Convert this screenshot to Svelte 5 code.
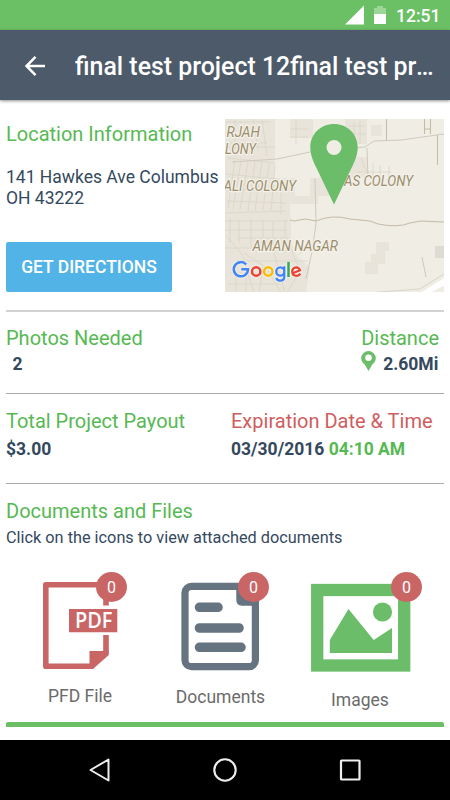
<script>
  let project = {
    title: "final test project 12final test project",
    address: ["141 Hawkes Ave Columbus", "OH 43222"],
    photos: 2,
    distance: "2.60Mi",
    payout: "$3.00",
    date: "03/30/2016",
    time: "04:10 AM",
  };

  let files = [
    { id: "pdf", label: "PFD File", count: 0 },
    { id: "doc", label: "Documents", count: 0 },
    { id: "img", label: "Images", count: 0 },
  ];
</script>

<div class="screen">
  <div class="status">
    <svg width="44" height="20" viewBox="0 0 44 20">
      <path d="M2 19.500L21 .5V19.500Z" fill="#fff" />
      <path d="M34 1h6v2h3v6H31V3h3z" fill="#fff" opacity=".35" />
      <path d="M31 9h12v10H31z" fill="#fff" />
    </svg>
    <span>12:51</span>
  </div>

  <header>
    <svg width="20" height="20" viewBox="0 0 20 20">
      <path d="M20 10H2M10.500 .9L1.500 10L10.500 19.100" fill="none" stroke="#fff" stroke-width="2.500" />
    </svg>
    <h1>{project.title}</h1>
  </header>

  <main>
    <section class="location">
      <div class="info">
        <h2 class="loc">Location Information</h2>
        <p class="address">{project.address[0]}<br />{project.address[1]}</p>
        <button type="button"><span>GET DIRECTIONS</span></button>
      </div>

      <svg class="map" width="219" height="173" viewBox="5 7 219 173">
        <rect x="5" y="7" width="219" height="174" fill="#f0ede5" />
        <!-- built up areas -->
        <g fill="#e8e4da">
          <path d="M5 7H55V47L54 66H75V84H98V92H70V105H71V130L78 145L90 155L86 181H5Z" />
          <path d="M70 7H93V26H70ZM125 7H147V32H125ZM151 13H162V24H151ZM127 45H148V65H127ZM90 66H110V84H90Z" />
          <path d="M156 130H169V139H165V152H158V162H145V150H151V142H156Z" />
        </g>
        <path d="M215 134H224V146H215Z" fill="#dedbd5" />
        <!-- minor streets -->
        <g fill="none" stroke="#d9d4c7" stroke-width=".8">
          <path d="M5 10H50M5 31H47M5 35H55M8 46L55 51M6 62L58 67M5 78L66 76M7 89L66 91M5 101L66 99M5 109H68M5 118H67M18 126H69M5 136H32M16 149H88M10 161H61M8 172H60" />
          <path d="M15 48L8 96M21 49L13 97M28 50L20 98M35 50L28 99M42 50L35 99M49 52L43 98M55 53L51 99M15 8V45M33 7L38 37M42 8L47 44M61 71V103" />
          <path d="M10 106V131M19 108V131M31 107V136M43 108V136M53 109V140M65 108V140" />
          <path d="M6 124L22 142L34 181M24 141L47 156L61 181M16 153V181M26 163V181M43 155L39 181M54 141L65 181M69 132L80 159L67 181M78 143L93 131" />
          <path d="M70 17H88M70 25H88M76 8V33M128 14H145M128 22H146M134 10V31M140 9V32" />
          <path d="M141 46L149 65M136 60H171M153 51V65M160 53V66M169 54V65" />
        </g>
        <g fill="none" stroke="#cfcabc" stroke-width="1">
          <path d="M12 50L57 47L90 40L145 35L154 29L181 28L224 22" />
          <path d="M95 67L96 112L92 140L86 167M147 36L148 65M202 145L206 165" />
        </g>
        <!-- bigger roads -->
        <g fill="none" stroke="#c3bba5">
          <path d="M166.500 7V28M204.500 7V22M210.500 7V22M204.500 17H210.500M217.500 23V53" />
          <path d="M70 108L74 109L85 107L96 109Q112 102 130 107L150 109L158 112Q178 116 190 111L201 109L224 110" />
        </g>
        <path d="M147 181L200 177L224 162" fill="none" stroke="#d8d3c6" />
        <path d="M197 183L229 163V171L206 183Z" fill="#fff" />
        <g class="place">
          <text x="6.500" y="25.300" textLength="33.500" lengthAdjust="spacingAndGlyphs">RJAH</text>
          <text x="5" y="42" textLength="31" lengthAdjust="spacingAndGlyphs">LONY</text>
          <text x="3.500" y="79" textLength="72.500" lengthAdjust="spacingAndGlyphs">ALI COLONY</text>
          <text x="124" y="74" textLength="69" lengthAdjust="spacingAndGlyphs">AS COLONY</text>
          <text x="32.500" y="139.300" textLength="85.500" lengthAdjust="spacingAndGlyphs">AMAN NAGAR</text>
        </g>
        <!-- google logo -->
        <g class="halo" fill="none">
          <path d="M26.200 152.500A7.100 7.100 0 1 0 28 157.300H21.300" stroke="#4285f4" stroke-width="2.500" />
          <circle cx="36.200" cy="159.500" r="4.200" stroke="#ea4335" stroke-width="2.500" />
          <circle cx="48.300" cy="159.500" r="4.200" stroke="#fbbc05" stroke-width="2.500" />
          <path d="M64.300 154.300V164.300Q64.300 168.700 60.300 168.700Q57.300 168.700 56.200 166M64.300 159.500A4 4.200 0 1 1 56.300 159.500A4 4.200 0 1 1 64.300 159.500" stroke="#4285f4" stroke-width="2.300" />
          <path d="M68.500 149.800V165" stroke="#34a853" stroke-width="2.500" />
          <path d="M72.700 161.300L80 158.200Q78.800 155.300 76.300 155.300Q72.200 155.700 72.200 159.700Q72.400 163.800 76.700 163.800Q79 163.800 80.300 161.700" stroke="#ea4335" stroke-width="2.300" />
        </g>
        <path d="M114 12C100.500 12 90.300 22 90.300 35.500C90.300 42 93 49 96 55L114 92.500L132 55C135 49 137.700 42 137.700 35.500C137.700 22 127.500 12 114 12Z" fill="#6bbd69" />
        <circle cx="114" cy="35.500" r="7.500" fill="#f0ede5" />
      </svg>
    </section>

    <section class="stats">
      <div>
        <h2 class="photos">Photos Needed</h2>
        <p class="value count">{project.photos}</p>
      </div>
      <div>
        <h2 class="distance">Distance</h2>
        <p class="value miles">
          <svg width="15" height="20" viewBox="0 0 15 20">
            <path d="M7.500 0A7.300 7.300 0 0 0 .2 7.300C.2 10 2 12 3.600 13.300L7.500 20L11.400 13.300C13 12 14.800 10 14.800 7.300A7.300 7.300 0 0 0 7.500 0ZM7.500 3.500A3.300 3.300 0 1 1 7.500 10.100A3.300 3.300 0 1 1 7.500 3.500Z" fill="#6bbd69" fill-rule="evenodd" />
          </svg>
          <span>{project.distance}</span>
        </p>
      </div>
    </section>

    <section class="payout">
      <div>
        <h2 class="total">Total Project Payout</h2>
        <p class="value">{project.payout}</p>
      </div>
      <div>
        <h2 class="expires">Expiration Date &amp; Time</h2>
        <p class="value">{project.date} <span class="time">{project.time}</span></p>
      </div>
    </section>

    <section class="documents">
      <h2 class="docs">Documents and Files</h2>
      <p class="hint">Click on the icons to view attached documents</p>
      <div class="files">
        {#each files as file}
          <div class="file {file.id}">
            {#if file.id === "pdf"}
              <svg width="140" height="102" viewBox="10 570 140 102">
                <path d="M106 605.500V584.700H45.800V666.300H91L106 651.500V635" fill="none" stroke="#ca6566" stroke-width="5.600" stroke-linejoin="round" />
                <path d="M89.500 651H108.800V655L93 669H89.500Z" fill="#ca6566" />
                <path d="M69 609H117.300V632.200H69Z" fill="#ca6566" />
                <text class="pdf-text" x="75" y="627.800" textLength="37.500" lengthAdjust="spacingAndGlyphs">PDF</text>
              </svg>
            {:else if file.id === "doc"}
              <svg width="140" height="102" viewBox="150 570 140 102">
                <rect x="185" y="586.300" width="70.400" height="80.400" rx="6.500" fill="none" stroke="#667380" stroke-width="7.200" />
                <path d="M236.300 586V600Q236.300 605.700 242 605.700H256V586Z" fill="#667380" />
                <path d="M199.500 607.300H218M199.500 628H239M199.500 647.300H241" stroke="#667380" stroke-width="9.600" stroke-linecap="round" />
              </svg>
            {:else}
              <svg width="140" height="102" viewBox="290 570 140 102">
                <rect x="317.200" y="590" width="87" height="75.500" fill="none" stroke="#6bbd69" stroke-width="12.300" />
                <path d="M329.800 640L348.500 609L373.700 640L392 628V653H329.800Z" fill="#6bbd69" />
                <circle cx="382.500" cy="612" r="9.600" fill="#6bbd69" />
              </svg>
            {/if}
            <span class="badge">{file.count}</span>
            <span class="label">{file.label}</span>
          </div>
        {/each}
      </div>
      <div class="bar"></div>
    </section>
  </main>

  <nav>
    <svg width="24" height="26" viewBox="0 0 24 26">
      <path d="M2.500 13L20.500 2.500V23.500Z" fill="none" stroke="#eee" stroke-width="2" stroke-linejoin="round" />
    </svg>
    <svg width="24" height="26" viewBox="0 0 24 26">
      <circle cx="12" cy="13" r="10.700" fill="none" stroke="#eee" stroke-width="2.100" />
    </svg>
    <svg width="24" height="26" viewBox="0 0 24 26">
      <rect x="3" y="3.500" width="18.500" height="19" rx=".6" fill="none" stroke="#eee" stroke-width="2.200" />
    </svg>
  </nav>
</div>

<style>
  :global(body) {
    background: #fff;
  }

  .screen {
    width: 450px;
    height: 800px;
    overflow: hidden;
    display: flex;
    flex-direction: column;
    font-family: Roboto, sans-serif;
    color: #34495e;
    background: #fff;
  }

  svg {
    display: block;
    flex: none;
  }

  h1,
  h2,
  p {
    margin: 0;
    font-weight: 400;
    white-space: nowrap;
  }

  .status {
    height: 30px;
    box-sizing: border-box;
    padding: 0 11px 0 0;
    background: #6bc065;
    display: flex;
    justify-content: flex-end;
    align-items: center;
    gap: 9px;
  }

  .status span {
    color: #fff;
    font-size: 17.500px;
    font-weight: 500;
    line-height: 30px;
    width: 43px;
    margin-top: 2px;
  }

  header {
    height: 70px;
    flex: none;
    box-sizing: border-box;
    padding: 0 10px 0 25px;
    background: #4c5a69;
    border-top: 1px solid #505571;
    box-shadow: 0 1px 3px rgba(0, 0, 0, 0.45);
    display: flex;
    align-items: center;
    gap: 30px;
  }

  h1 {
    flex: 1;
    min-width: 0;
    overflow: hidden;
    text-overflow: ellipsis;
    color: #fff;
    font-size: 24.900px;
    font-weight: 500;
    line-height: 34px;
    margin-top: 3px;
  }

  main {
    flex: 1;
    padding: 0 6px;
  }

  section {
    box-sizing: border-box;
    border-bottom: 1px solid #aaa;
  }

  h2 {
    color: #57b953;
    font-size: 20px;
    line-height: 24px;
  }

  .value {
    font-size: 17.500px;
    line-height: 22px;
    font-weight: 700;
  }

  .location {
    height: 212px;
    border-bottom: 2px solid #d3d3d3;
    display: flex;
  }

  .info {
    width: 219px;
    padding-top: 22px;
  }

  .address {
    margin-top: 21px;
    font-size: 17.500px;
    line-height: 21px;
  }

  button {
    display: block;
    width: 166px;
    height: 50px;
    margin: 33px 0 0;
    padding: 0;
    border: 0;
    border-radius: 2px;
    background: #51b3e6;
    color: #fff;
    font: 500 17.500px/51px Roboto, sans-serif;
  }

  .map {
    margin-top: 19px;
  }

  .place {
    font: italic 14.500px Roboto, sans-serif;
    fill: #9b8e6b;
    stroke: #f4f1ea;
    stroke-width: 2.500px;
    paint-order: stroke;
  }

  .halo {
    filter: drop-shadow(0 0 1px #fff);
  }

  .stats {
    height: 82px;
    padding: 14px 5px 0 0;
    display: flex;
    justify-content: space-between;
  }

  .count {
    margin-top: 3px;
    padding-left: 6.500px;
  }

  .miles {
    display: flex;
    gap: 7px;
    margin-top: 3px;
  }

  .miles svg {
    margin-top: -2px;
  }

  .payout {
    height: 90px;
    padding-top: 15px;
    display: grid;
    grid-template-columns: 225px 1fr;
  }

  .payout .value {
    margin-top: 5px;
  }

  .expires {
    color: #cf5d5e;
  }

  .time {
    color: #57b953;
  }

  .documents {
    border: 0;
    padding-top: 15px;
  }

  .hint {
    margin-top: 5px;
    font-size: 16.300px;
    line-height: 20px;
  }

  .files {
    display: grid;
    grid-template-columns: repeat(3, 140px);
    height: 152px;
    margin: 22px 0 0 4px;
  }

  .file {
    position: relative;
    text-align: center;
  }

  .badge {
    position: absolute;
    top: 2px;
    left: 86px;
    width: 31px;
    height: 30px;
    border-radius: 50%;
    background: #ca6566;
    color: #fff;
    font-size: 16px;
    line-height: 32px;
  }

  .doc .badge {
    left: 88px;
  }

  .img .badge {
    left: 101px;
  }

  .label {
    display: block;
    margin-top: 13px;
    font-size: 17.500px;
    line-height: 22px;
    color: #6b6b6b;
  }

  .doc .label {
    margin-top: 14px;
    padding-left: 1px;
  }

  .img .label {
    margin-top: 17px;
  }

  .pdf-text {
    font: 600 21px "Open Sans", sans-serif;
    fill: #fff;
  }

  .bar {
    height: 5px;
    border-radius: 2px 2px 0 0;
    background: #6bc065;
  }

  nav {
    height: 60px;
    background: #000;
    display: flex;
    justify-content: space-between;
    align-items: center;
    padding: 0 88px;
  }
</style>
